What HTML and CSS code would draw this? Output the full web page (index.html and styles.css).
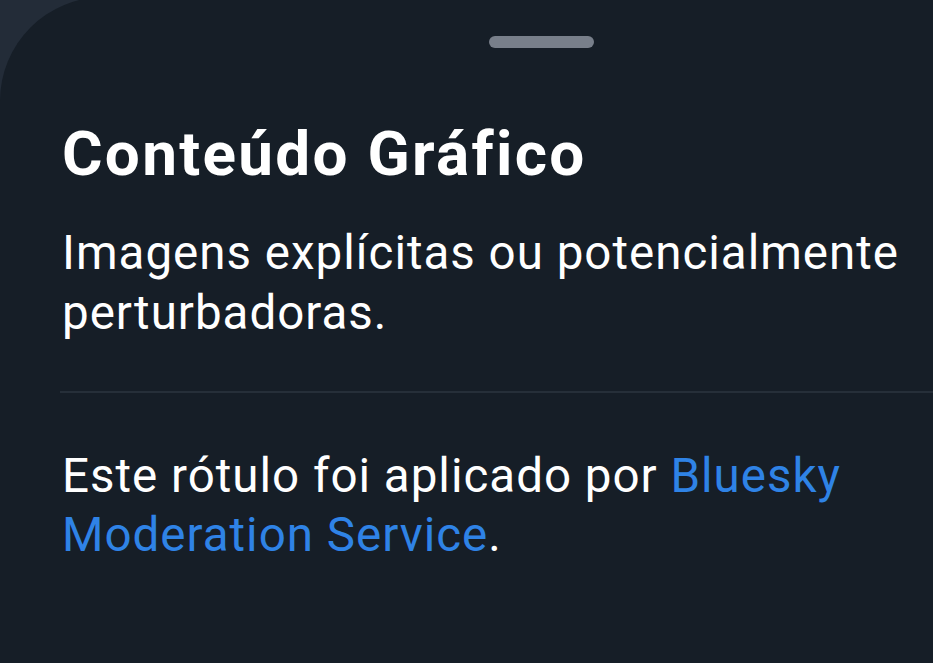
FILE: index.html
```html
<!DOCTYPE html>
<html>
  <head>
    <title>Conteúdo Gráfico</title>
    <meta http-equiv="Content-Type" content="text/html; charset=utf-8" />
    <meta name="viewport" content="width=device-width" />
    <link rel="stylesheet" href="styles.css">
  </head>
  <body>

    <div id="sheet">
        <div id="handle"></div>

        <h1 id="title">Conteúdo Gráfico</h1>
        <p id="description">Imagens explícitas ou potencialmente perturbadoras.</p>

        <div id="divider"></div>

        <p id="source">Este rótulo foi aplicado por <a href="#">Bluesky Moderation Service</a>.</p>
    </div>

  </body>
</html>
```

FILE: styles.css
```css
body {
    font-family: Roboto, "Noto Sans", sans-serif;
    margin: 0;
    padding: 0;
    width: 100%;
    height: 100vh;
    overflow: hidden;
    background: #232c38;
    color: #ffffff;
}

#sheet {
    box-sizing: border-box;
    width: 100%;
    height: calc(100vh + 3px);
    margin-top: -3px;
    background: #161e27;
    border-top-left-radius: 104px;
    padding: 0 0 0 62px;
    display: flex;
    flex-direction: column;
}

#handle {
    align-self: flex-start;
    width: 105px;
    height: 12px;
    margin: 39px 0 0 427px;
    border-radius: 6px;
    background: #787f8a;
}

#title {
    font-size: 62px;
    font-weight: 700;
    letter-spacing: 2.3px;
    line-height: 74px;
    margin: 69px 0 0 0;
}

#description {
    font-size: 47.5px;
    letter-spacing: 1px;
    line-height: 60px;
    margin: 32px 0 0 0;
}

#divider {
    height: 2px;
    background: #262f39;
    margin: 48px 0 0 -2px;
}

#source {
    font-size: 47.5px;
    letter-spacing: 1px;
    line-height: 59px;
    margin: 54px 0 0 0;
}
#source a {
    color: #2f83e6;
    text-decoration: none;
}
```
